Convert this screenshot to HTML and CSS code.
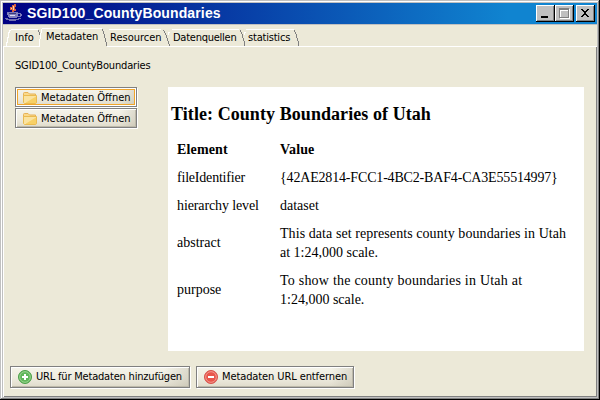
FILE: index.html
```html
<!DOCTYPE html>
<html lang="de">
<head>
<meta charset="utf-8">
<title>SGID100_CountyBoundaries</title>
<link rel="stylesheet" href="styles.css">
</head>
<body>
<div class="window">
  <header class="titlebar">
    <svg class="java" width="18" height="20" viewBox="0 0 18 20" shape-rendering="crispEdges">
      <path d="M7 9V7H5V4H7V2H9V1H11V4H10V6H11V8H9V9Z" fill="#d5603f"/>
      <path d="M8 3H9V7H8ZM6 5H7V6H6Z" fill="#ffd2a0"/>
      <path d="M2 9H13V10H2ZM13 10H16V11H17V13H16V14H13V13H15V11H13Z" fill="#7777ba"/>
      <path d="M2 10H13V14H12V15H4V14H3V12H2Z" fill="#8080bd"/>
      <path d="M4 10H11V11H4Z" fill="#3c3c79"/>
      <path d="M5 12H10V13H5Z" fill="#ddddf4"/>
      <path d="M0 15H3V16H13V15H16V16H14V17H11V18H4V17H1V16H0Z" fill="#7070b0"/>
    </svg>
    <h1 class="caption">SGID100_CountyBoundaries</h1>
    <div class="controls">
      <span class="control"><svg width="16" height="14" shape-rendering="crispEdges"><path d="M4 10H11V12H4Z" fill="#000"/></svg></span>
      <span class="control"><svg width="16" height="14" shape-rendering="crispEdges"><path d="M4 3H14V13H4Z" fill="#fff"/><path d="M3 2H13V12H3Z" fill="#808080"/><path d="M4 4H12V11H4Z" fill="#fff"/><path d="M5 5H12V11H5Z" fill="#c0c0c0"/></svg></span>
      <span class="control close"><svg width="16" height="14" shape-rendering="crispEdges"><path d="M4 3H6V4H7V5H9V4H10V3H12V4H11V5H10V6H9V8H10V9H11V10H12V11H10V10H9V9H7V10H6V11H4V10H5V9H6V8H7V6H6V5H5V4H4Z" fill="#000"/></svg></span>
    </div>
  </header>
  <nav class="tabs">
    <svg class="tab-edges" width="594" height="22" viewBox="3 25 594 22" shape-rendering="crispEdges" fill="none">
      <path d="M3.5 47V46.500H39M107 46.500H597" stroke="#fff"/>
      <path d="M6.500 46V42H7.500V37H8.500V32H9.500V30H11M11 29.500H38M39 46.500V43M39.500 44V39M40.500 39V33M41.500 33V29M42 28.500H102M109 29.500H161M172 29.500H239M168.500 35V32H170M244.500 35V32H246M246 29.500H294" stroke="#fff"/>
      <path d="M38.500 30V32M39.500 32V35M102.500 29V31M103.500 31V34M104.500 34V38M105.500 38V42M106.500 42V46M162.500 30H164M164.500 31V33M165.500 33V35M166.500 35V38M167.500 38V41M168.500 41V44M169.500 44V46M240.500 30V32M241.500 32V34M242.500 34V38M243.500 38V41M244.500 41V46M294.500 30V32M295.500 32V34M296.500 34V38M297.500 38V41M298.500 41V46" stroke="#808080"/>
    </svg>
    <span class="tab info">Info</span>
    <span class="tab selected">Metadaten</span>
    <span class="tab resources">Resourcen</span>
    <span class="tab sources">Datenquellen</span>
    <span class="tab stats">statistics</span>
  </nav>
  <main class="panel">
    <p class="name">SGID100_CountyBoundaries</p>
    <div class="content">
      <div class="links">
        <button class="button small focused"><svg class="folder" width="14" height="12"><path d="M.5 1.500Q.5.5 1.500.5H5L6.500 2H12.500V4H.5Z" fill="#fbd98b" stroke="#e6b257"/><path d="M.5 3.500H13.500V10Q13.500 11.500 12 11.500H1.500L.5 10.500Z" fill="#fae3a1" stroke="#eabb51"/><path d="M3 10.500L13 4.500V11H3Z" fill="#f7d067"/></svg><span>Metadaten Öffnen</span></button>
        <button class="button small"><svg class="folder" width="14" height="12"><path d="M.5 1.500Q.5.5 1.500.5H5L6.500 2H12.500V4H.5Z" fill="#fbd98b" stroke="#e6b257"/><path d="M.5 3.500H13.500V10Q13.500 11.500 12 11.500H1.500L.5 10.500Z" fill="#fae3a1" stroke="#eabb51"/><path d="M3 10.500L13 4.500V11H3Z" fill="#f7d067"/></svg><span>Metadaten Öffnen</span></button>
      </div>
      <article class="document">
        <h2 class="doc-title">Title: County Boundaries of Utah</h2>
        <table class="metadata">
          <tr><th>Element</th><th class="value-head">Value</th></tr>
          <tr><td class="file-id">fileIdentifier</td><td class="identifier">{42AE2814-FCC1-4BC2-BAF4-CA3E55514997}</td></tr>
          <tr><td class="level">hierarchy level</td><td>dataset</td></tr>
          <tr class="tall"><td>abstract</td><td><span class="summary">This data set represents county boundaries in Utah</span><br>at 1:24,000 scale.</td></tr>
          <tr class="tall"><td>purpose</td><td><span class="goal">To show the county boundaries in Utah at</span><br>1:24,000 scale.</td></tr>
        </table>
      </article>
    </div>
    <footer class="actions">
      <button class="button add"><svg width="14" height="14"><circle cx="7" cy="7" r="6.500" fill="#61b75b" stroke="#4b9e48"/><circle cx="7" cy="7" r="5.300" fill="none" stroke="#9bd491"/><path d="M7 4V10M4 7H10" stroke="#fff" stroke-width="2"/></svg><span>URL für Metadaten hinzufügen</span></button>
      <button class="button remove"><svg width="14" height="14"><circle cx="7" cy="7" r="6.500" fill="#e9554b" stroke="#d5534c"/><circle cx="7" cy="7" r="5.300" fill="none" stroke="#f29990"/><path d="M4 7H10" stroke="#fff" stroke-width="2"/></svg><span>Metadaten URL entfernen</span></button>
    </footer>
  </main>
</div>
</body>
</html>
```
FILE: styles.css
```css
* { box-sizing: border-box; }
body { margin: 0; overflow: hidden; font: 11px/14px "DejaVu Sans Condensed", "DejaVu Sans", sans-serif; font-stretch: condensed; color: #000; }
.window {
  width: 600px; height: 400px; padding: 3px; background: #ece9d8;
  border: 0;
  box-shadow: inset -1px -1px #000, inset 1px 1px #c0c0c0, inset -2px -2px #808080, inset 2px 2px #fff, inset 0 0 0 3px #c0c0c0;
  display: flex; flex-direction: column;
}
.titlebar {
  height: 22px; flex: none; display: flex; align-items: flex-start; padding: 0 2px 0 2px;
  background: linear-gradient(90deg, #000082, #1084d0 85%); border-bottom: 1px solid #c0c0c0;
}
.java { flex: none; }
.caption { margin: 0 0 0 4px; font: bold 14px/21px "Liberation Sans", sans-serif; color: #fff; flex: 1; letter-spacing: .13px; white-space: nowrap; }
.controls { display: flex; padding-top: 2px; }
.control { width: 19px; height: 17px; background: #c0c0c0; box-shadow: inset -1px -1px #000, inset 1px 1px #fff, inset -2px -2px #808080; padding: 1px; }
.control svg { display: block; }
.close { margin-left: 2px; }
.tabs { position: relative; height: 22px; flex: none; display: flex; padding: 6px 0 0 12px; white-space: nowrap; }
.tab-edges { position: absolute; left: 0; top: 0; }
.tab { position: relative; }
.info { width: 31px; }
.selected { width: 64px; margin-top: -1px; letter-spacing: -.1px; }
.resources { width: 63px; }
.sources { width: 75px; letter-spacing: -.25px; }
.stats { letter-spacing: -.2px; }
.panel { flex: 1; border-left: 1px solid #fff; box-shadow: inset -1px -1px #808080; padding: 12px 12px 9px 11px; display: flex; flex-direction: column; }
.name { margin: 0; height: 28px; flex: none; letter-spacing: -.16px; }
.content { display: flex; gap: 30px; height: 264px; }
.links { width: 123px; display: flex; flex-direction: column; }
.button {
  display: flex; align-items: center; border: 1px solid #808080; border-radius: 0; margin: 0; font: inherit; color: #000; white-space: nowrap;
  background: linear-gradient(90deg, transparent 86%, rgba(150, 145, 125, .25)), linear-gradient(#f5f4ea, #eeebdf 55%, #dfdbcb);
  box-shadow: inset 1px 1px #fff, inset -1px -1px #bdb9aa, 1px 1px #fff;
}
.small { width: 122px; height: 20px; padding: 1px 0 0 7px; gap: 4px; margin-bottom: 1px; }
.focused { box-shadow: inset 0 0 0 1px #fff, inset 0 0 0 2px #f0a52b, 1px 1px #fff; }
.folder { flex: none; }
.document { width: 416px; height: 264px; background: #fff; padding: 15px 3px; font: 14px/19px "Liberation Serif", serif; font-stretch: normal; }
.doc-title { margin: 0; font: bold 18px/24px "Liberation Serif", serif; white-space: nowrap; letter-spacing: .07px; }
.metadata { border-collapse: collapse; margin: 9px 0 0 6px; white-space: nowrap; }
.metadata th, .metadata td { height: 28px; padding: 0; text-align: left; vertical-align: middle; }
.metadata td:first-child, .metadata th:first-child { width: 103px; }
.metadata th { letter-spacing: .15px; }
.metadata .file-id { letter-spacing: -.2px; }
.metadata .level { letter-spacing: -.12px; }
.metadata .identifier { letter-spacing: -.17px; }
.summary { letter-spacing: .07px; }
.goal { letter-spacing: .22px; }
.metadata .tall td { height: 47px; }
.actions { display: flex; gap: 6px; margin: 15px 0 0 -5px; }
.actions .button { height: 22px; padding: 0 0 0 7px; gap: 4px; }
.add { width: 180px; letter-spacing: -.19px; }
.remove { width: 158px; letter-spacing: -.1px; }
```
